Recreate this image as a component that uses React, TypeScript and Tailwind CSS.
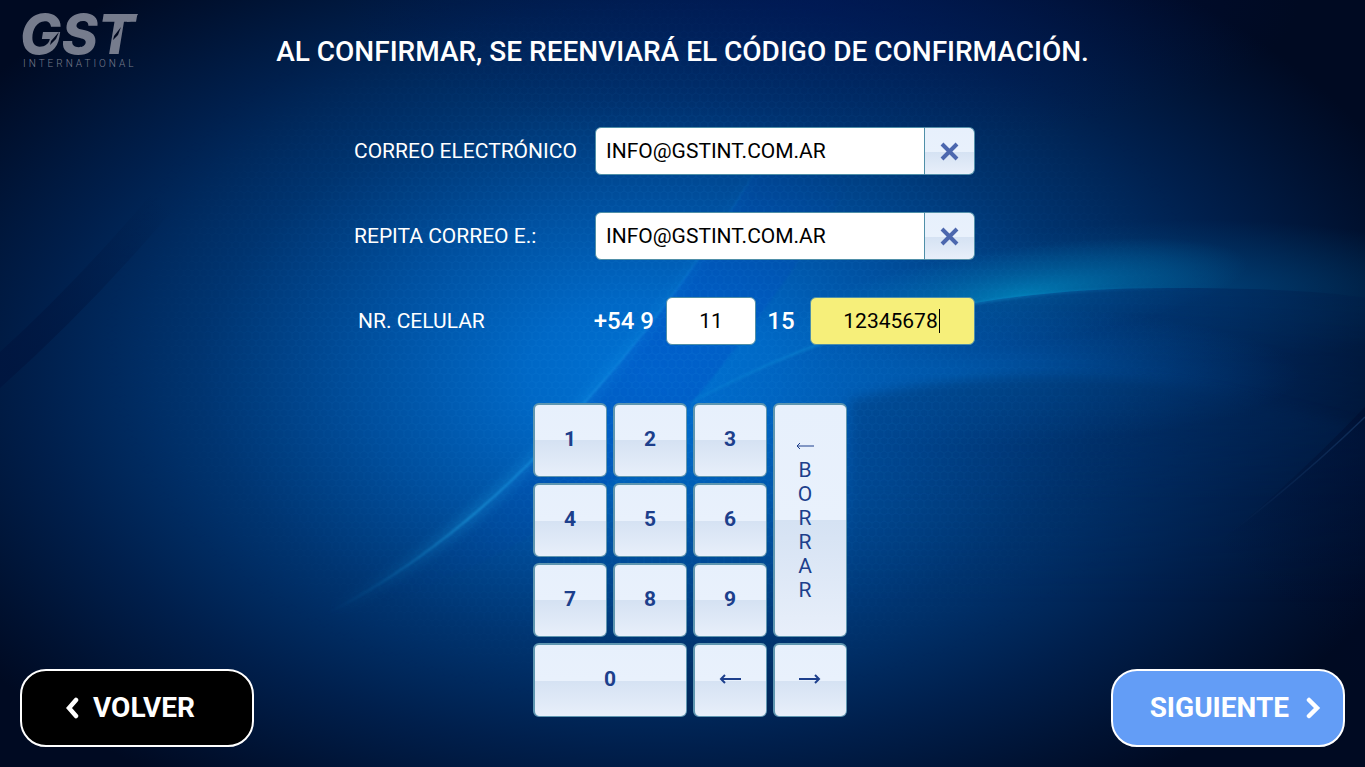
import { useState } from "react";
import type { ReactNode } from "react";

const fieldClass =
  "h-12 border border-[#4f8fa8] bg-white text-[21px] text-black outline-none";
const keyClass =
  "flex items-center justify-center rounded-md border border-t-2 border-l-2 border-[#5f96b0] bg-[linear-gradient(#e7f0fc_0%,#e9f1fc_50%,#d5e2f3_50%,#e8effa_100%)] pb-0.5 text-[21px] font-bold text-[#1d3f8c]";

function Backdrop() {
  return (
    <svg
      className="absolute inset-0 -z-10 h-full w-full"
      viewBox="0 0 1365 767"
      preserveAspectRatio="xMidYMid slice"
      aria-hidden="true"
    >
      <defs>
        <radialGradient id="base" gradientUnits="userSpaceOnUse" cx="0" cy="0" r="1" gradientTransform="translate(650 375) scale(820 500)">
          <stop offset="0" stopColor="#0072d4" />
          <stop offset="0.15" stopColor="#0068c6" />
          <stop offset="0.35" stopColor="#004f9e" />
          <stop offset="0.55" stopColor="#003470" />
          <stop offset="0.75" stopColor="#001f4c" />
          <stop offset="0.9" stopColor="#001232" />
          <stop offset="1" stopColor="#000a22" />
        </radialGradient>
        <radialGradient id="violet" gradientUnits="userSpaceOnUse" cx="0" cy="0" r="1" gradientTransform="translate(820 0) scale(480 150)">
          <stop offset="0" stopColor="#001660" stopOpacity="0.5" />
          <stop offset="1" stopColor="#001660" stopOpacity="0" />
        </radialGradient>
        <radialGradient id="glow" gradientUnits="userSpaceOnUse" cx="0" cy="0" r="1" gradientTransform="translate(1020 295) rotate(-8) scale(230 48)">
          <stop offset="0" stopColor="#0098cc" stopOpacity="0.65" />
          <stop offset="0.5" stopColor="#0085c0" stopOpacity="0.33" />
          <stop offset="1" stopColor="#0080c0" stopOpacity="0" />
        </radialGradient>
        <radialGradient id="wideGlow" gradientUnits="userSpaceOnUse" cx="0" cy="0" r="1" gradientTransform="translate(1200 290) scale(300 70)">
          <stop offset="0" stopColor="#00609c" stopOpacity="0.45" />
          <stop offset="1" stopColor="#00609c" stopOpacity="0" />
        </radialGradient>
        <radialGradient id="lowGlow" gradientUnits="userSpaceOnUse" cx="0" cy="0" r="1" gradientTransform="translate(960 375) scale(340 70)">
          <stop offset="0" stopColor="#0070c8" stopOpacity="0.45" />
          <stop offset="1" stopColor="#0070c8" stopOpacity="0" />
        </radialGradient>
        <linearGradient id="beam" gradientUnits="userSpaceOnUse" x1="780" y1="120" x2="380" y2="600">
          <stop offset="0" stopColor="#0040c0" stopOpacity="0" />
          <stop offset="0.4" stopColor="#004cc4" stopOpacity="0.45" />
          <stop offset="0.65" stopColor="#004cb8" stopOpacity="0.35" />
          <stop offset="1" stopColor="#003880" stopOpacity="0" />
        </linearGradient>
        <linearGradient id="edge" gradientUnits="userSpaceOnUse" x1="780" y1="110" x2="330" y2="620">
          <stop offset="0" stopColor="#18a0f0" stopOpacity="0" />
          <stop offset="0.6" stopColor="#20a8f0" stopOpacity="0.45" />
          <stop offset="0.75" stopColor="#20a8e8" stopOpacity="0.55" />
          <stop offset="1" stopColor="#1080c0" stopOpacity="0" />
        </linearGradient>
        <linearGradient id="arcShade" gradientUnits="userSpaceOnUse" x1="700" y1="0" x2="1365" y2="0">
          <stop offset="0" stopColor="#0050b8" stopOpacity="0.1" />
          <stop offset="0.4" stopColor="#003a88" stopOpacity="0.65" />
          <stop offset="1" stopColor="#001f48" stopOpacity="0.6" />
        </linearGradient>
        <linearGradient id="arcFade" gradientUnits="userSpaceOnUse" x1="0" y1="290" x2="0" y2="500">
          <stop offset="0" stopColor="#fff" />
          <stop offset="0.4" stopColor="#fff" stopOpacity="0.7" />
          <stop offset="1" stopColor="#fff" stopOpacity="0" />
        </linearGradient>
        <mask id="arcMask" maskUnits="userSpaceOnUse" x="0" y="0" width="1600" height="767">
          <rect width="1600" height="767" fill="url(#arcFade)" />
        </mask>
        <linearGradient id="arcEdge" gradientUnits="userSpaceOnUse" x1="680" y1="0" x2="1200" y2="0">
          <stop offset="0" stopColor="#18a8e8" stopOpacity="0.1" />
          <stop offset="0.4" stopColor="#18a8e0" stopOpacity="0.5" />
          <stop offset="1" stopColor="#0870b8" stopOpacity="0" />
        </linearGradient>
        <linearGradient id="lowerArc" gradientUnits="userSpaceOnUse" x1="0" y1="375" x2="0" y2="600">
          <stop offset="0" stopColor="#002858" stopOpacity="0.35" />
          <stop offset="1" stopColor="#002858" stopOpacity="0" />
        </linearGradient>
        <linearGradient id="rim" gradientUnits="userSpaceOnUse" x1="1365" y1="400" x2="1230" y2="530">
          <stop offset="0" stopColor="#2a5a90" stopOpacity="0.4" />
          <stop offset="1" stopColor="#2a5a90" stopOpacity="0" />
        </linearGradient>
        <linearGradient id="corner" gradientUnits="userSpaceOnUse" x1="1365" y1="420" x2="1225" y2="550">
          <stop offset="0" stopColor="#000a2c" stopOpacity="0.45" />
          <stop offset="1" stopColor="#000a2c" stopOpacity="0" />
        </linearGradient>
        <linearGradient id="leftBand" gradientUnits="userSpaceOnUse" x1="0" y1="360" x2="150" y2="190">
          <stop offset="0" stopColor="#00153f" stopOpacity="0.8" />
          <stop offset="1" stopColor="#00153f" stopOpacity="0" />
        </linearGradient>
        <filter id="soft" x="-20%" y="-20%" width="140%" height="140%" colorInterpolationFilters="sRGB">
          <feGaussianBlur stdDeviation="6" />
        </filter>
        <filter id="fine" x="-10%" y="-10%" width="120%" height="120%" colorInterpolationFilters="sRGB">
          <feGaussianBlur stdDeviation="1" />
        </filter>
        <pattern id="mesh" width="8" height="14" patternUnits="userSpaceOnUse">
          <path d="M4 0v3L0 5v4l4 2v3M4 3l4 2v4l-4 2" fill="none" stroke="#2ba0f0" strokeWidth="0.8" />
        </pattern>
        <radialGradient id="meshFade" gradientUnits="userSpaceOnUse" cx="0" cy="0" r="1" gradientTransform="translate(660 340) scale(560 370)">
          <stop offset="0" stopColor="#fff" stopOpacity="0.15" />
          <stop offset="0.6" stopColor="#fff" stopOpacity="0.08" />
          <stop offset="1" stopColor="#fff" stopOpacity="0" />
        </radialGradient>
        <mask id="meshMask">
          <rect width="1365" height="767" fill="url(#meshFade)" />
        </mask>
      </defs>
      <rect width="1365" height="767" fill="url(#base)" />
      <rect width="1365" height="767" fill="url(#violet)" />
      <path d="M0 352Q90 270 180 160L210 165Q110 290 0 388Z" fill="url(#leftBand)" />
      <rect width="1365" height="767" fill="url(#wideGlow)" />
      <rect width="1365" height="767" fill="url(#glow)" />
      <path d="M850 0Q730 240 592 394C530 470 430 565 310 622Q500 580 650 450Q790 300 960 0Z" fill="url(#beam)" filter="url(#fine)" />
      <path d="M850 0Q730 240 592 394C530 470 430 565 310 622" fill="none" stroke="url(#edge)" strokeWidth="12" opacity="0.5" filter="url(#soft)" />
      <path d="M850 0Q730 240 592 394C530 470 430 565 310 622" fill="none" stroke="url(#edge)" strokeWidth="2" filter="url(#fine)" />
      <g mask="url(#arcMask)">
        <path d="M680 408C800 345 930 288 1170 288S1400 310 1500 330V600H680Z" fill="url(#arcShade)" />
      </g>
      <path d="M680 408C800 345 930 288 1170 288S1400 310 1500 330" fill="none" stroke="url(#arcEdge)" strokeWidth="3" filter="url(#fine)" />
      <rect width="1365" height="767" fill="url(#lowGlow)" />
      <path d="M850 400Q1050 350 1270 404T1500 480V640H850Z" fill="url(#lowerArc)" filter="url(#soft)" />
      <path d="M1450 310Q1340 445 1215 545L1100 780H1450Z" fill="url(#corner)" />
      <path d="M1365 417Q1300 480 1215 545" fill="none" stroke="url(#rim)" strokeWidth="1.5" />
      <rect width="1365" height="767" fill="url(#mesh)" mask="url(#meshMask)" />
    </svg>
  );
}

function Logo() {
  return (
    <svg className="h-[60px] w-[130px] overflow-visible" viewBox="0 0 130 60" role="img" aria-label="GST International">
      <g fill="#767c8d">
        <text x="0" y="42" fontFamily="Inter, sans-serif" fontWeight="800" fontStyle="italic" fontSize="55">
          GST
        </text>
        <text x="3" y="55" fontFamily="Roboto, sans-serif" fontSize="10" fontWeight="300" letterSpacing="3">
          INTERNATIONAL
        </text>
      </g>
      <path d="M31 29l8-9-3 7-6 6zM94 24l7-9-3 8-5 5z" fill="#00081f" />
      <path d="M108 2h10q-3 7-11 8z" fill="#767c8d" />
    </svg>
  );
}

function EmailRow({ id, label }: { id: string; label: string }) {
  const [value, setValue] = useState("INFO@GSTINT.COM.AR");
  return (
    <div className="flex items-center justify-between">
      <label htmlFor={id} className="text-[21px] leading-8">
        {label}
      </label>
      <div className="flex w-[380px]">
        <input
          id={id}
          type="text"
          value={value}
          onChange={(e) => setValue(e.target.value)}
          className={`${fieldClass} min-w-0 flex-1 rounded-l-md px-2.5`}
        />
        <button
          type="button"
          aria-label="Limpiar"
          onClick={() => setValue("")}
          className="flex h-12 w-[50px] items-center justify-center rounded-r-md border border-l-0 border-[#5590aa] bg-[linear-gradient(#e7f0fc_0%,#e9f1fc_52%,#d5e2f3_52%,#e8effa_100%)]"
        >
          <svg width="20" height="20" viewBox="0 0 20 20" aria-hidden="true">
            <path d="M2 3l15 15M17 3L2 18" stroke="#4c67ae" strokeWidth="4" />
          </svg>
        </button>
      </div>
    </div>
  );
}

function Key({ label, className = "", children }: { label: string; className?: string; children?: ReactNode }) {
  return (
    <button type="button" aria-label={label} className={`${keyClass} ${className}`}>
      {children ?? label}
    </button>
  );
}

function Arrow({ flip = false }: { flip?: boolean }) {
  return (
    <svg width="22" height="12" viewBox="0 0 22 12" className={flip ? "rotate-180" : ""} aria-hidden="true">
      <path d="M22 6H2M6 2L2 6l4 4" fill="none" stroke="#1d3f8c" strokeWidth="2" />
    </svg>
  );
}

export default function App() {
  const [area, setArea] = useState("11");
  const [phone, setPhone] = useState("12345678");

  return (
    <div className="relative isolate flex min-h-screen flex-col overflow-hidden bg-[#000a24] font-[Roboto,sans-serif] text-white">
      <Backdrop />
      <header className="grid grid-cols-[1fr_auto_1fr] items-start px-5 pt-3">
        <Logo />
        <h1 className="pt-5 text-[28px] leading-10 font-medium">
          AL CONFIRMAR, SE REENVIARÁ EL CÓDIGO DE CONFIRMACIÓN.
        </h1>
      </header>

      <form className="mx-auto mt-[55px] pr-9">
        <div className="flex w-[621px] flex-col gap-[37px]">
          <EmailRow id="email" label="CORREO ELECTRÓNICO" />
          <EmailRow id="email-repeat" label="REPITA CORREO E.:" />
          <div className="flex items-center justify-between pl-1">
            <label htmlFor="phone" className="text-[21px] leading-8">
              NR. CELULAR
            </label>
            <div className="flex items-center text-2xl font-medium">
              <label htmlFor="area" className="pr-3">
                +54 9
              </label>
              <input
                id="area"
                type="text"
                value={area}
                onChange={(e) => setArea(e.target.value)}
                className={`${fieldClass} w-[90px] rounded-md text-center font-normal`}
              />
              <label htmlFor="phone" className="w-[54px] pr-1 text-center">
                15
              </label>
              <div className="relative">
                <input
                  id="phone"
                  type="text"
                  value={phone}
                  onChange={(e) => setPhone(e.target.value)}
                  className="h-12 w-[165px] rounded-md border border-[#4f8fa8] bg-[#f6ef7a] pr-1 text-center text-[21px] font-normal text-black outline-none"
                />
                <span className="absolute top-3 left-[129px] h-6 w-px bg-black" />
              </div>
            </div>
          </div>
        </div>
      </form>

      <main className="mt-auto grid grid-cols-[1fr_auto_1fr] items-end px-5 pt-10 pb-5">
        <button
          type="button"
          className="flex h-[78px] w-[234px] items-center gap-3.5 rounded-[26px] border-2 border-white bg-black pl-[43px] text-[28px] font-bold"
        >
          <svg width="14" height="22" viewBox="0 0 14 22" aria-hidden="true">
            <path d="M11 3L4 11l7 8" fill="none" stroke="#fff" strokeWidth="4.5" strokeLinecap="round" />
          </svg>
          VOLVER
        </button>

        <div className="mb-[30px] pl-3.5">
          <div className="grid auto-rows-[74px] grid-cols-[repeat(4,74px)] gap-1.5">
            <Key label="1" />
            <Key label="2" />
            <Key label="3" />
            <Key label="Borrar" className="row-span-3 flex-col pr-2.5 pb-1.5 font-normal">
              <svg width="18" height="24" viewBox="0 0 18 24" aria-hidden="true">
                <path d="M18 12H1M4 9l-3 3 3 3" fill="none" stroke="#1d3f8c" strokeWidth="1" />
              </svg>
              {"BORRAR".split("").map((letter, i) => (
                <span key={i} className="leading-6">
                  {letter}
                </span>
              ))}
            </Key>
            <Key label="4" />
            <Key label="5" />
            <Key label="6" />
            <Key label="7" />
            <Key label="8" />
            <Key label="9" />
            <Key label="0" className="col-span-2" />
            <Key label="Izquierda" className="pb-1">
              <Arrow />
            </Key>
            <Key label="Derecha" className="pb-1">
              <Arrow flip />
            </Key>
          </div>
        </div>

        <button
          type="button"
          className="flex h-[78px] w-[234px] items-center justify-end gap-4 justify-self-end rounded-[26px] border-2 border-white bg-[#639df6] pr-[22px] text-[28px] font-bold"
        >
          SIGUIENTE
          <svg width="16" height="22" viewBox="0 0 16 22" aria-hidden="true">
            <path d="M4 3l8 8-8 8" fill="none" stroke="#fff" strokeWidth="4.5" strokeLinecap="round" />
          </svg>
        </button>
      </main>
    </div>
  );
}
